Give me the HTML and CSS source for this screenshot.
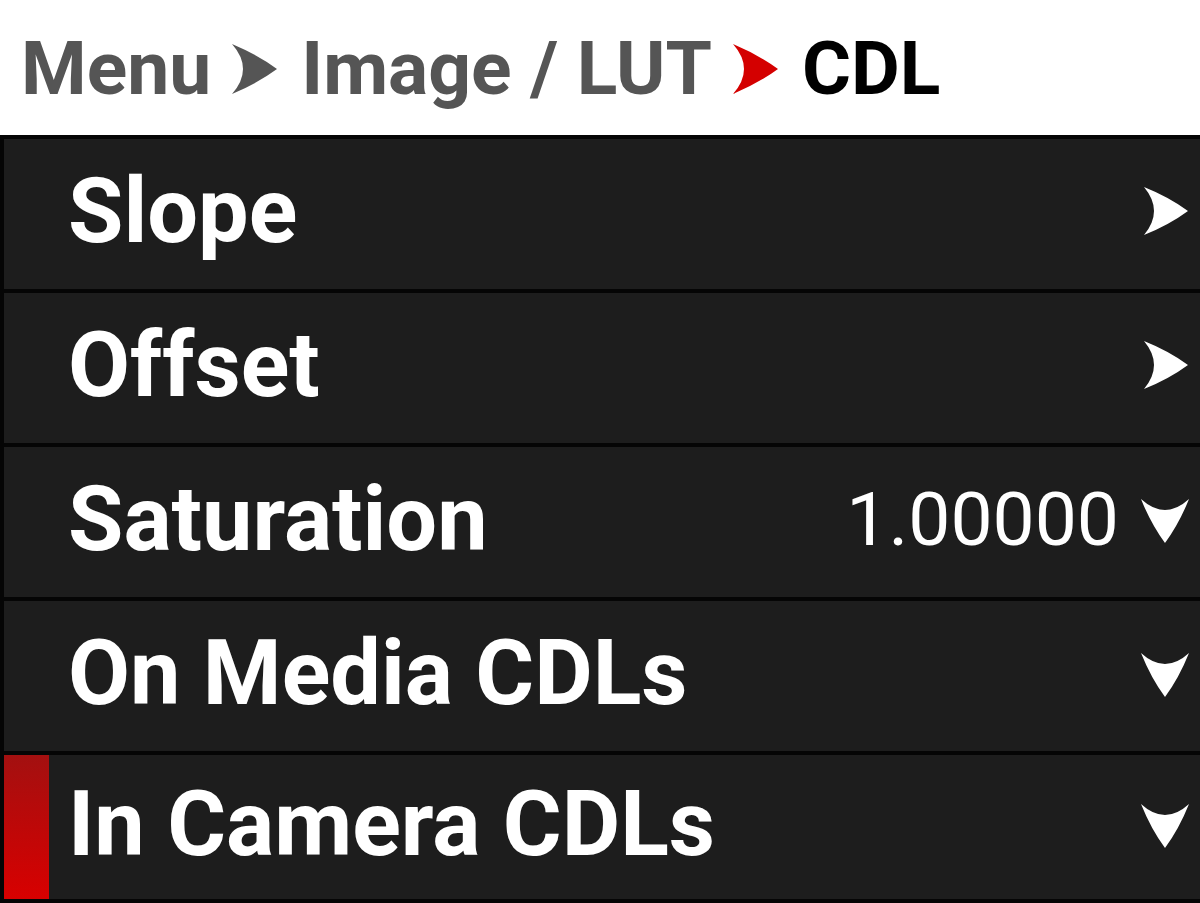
FILE: index.html
```html
<!DOCTYPE html>
<html lang="en">
<head>
    <meta charset="UTF-8">
    <title>CDL</title>
    <link rel="stylesheet" href="styles.css">
</head>
<body>
    <div class="crumbs">
        <span class="crumb">Menu</span>
        <svg class="sep" viewBox="0 0 45 50"><path d="M0 0 Q26 11 45 25 Q26 39 0 50 Q22 25 0 0 Z" fill="#555"/></svg>
        <span class="crumb">Image / LUT</span>
        <svg class="sep" viewBox="0 0 45 50"><path d="M0 0 Q26 11 45 25 Q26 39 0 50 Q22 25 0 0 Z" fill="#d40000"/></svg>
        <span class="crumb current">CDL</span>
    </div>

    <div class="panel">
        <div class="row">
            <span class="label">Slope</span>
            <svg class="go" viewBox="0 0 44 48"><path d="M0 0 Q25 10 44 24 Q25 38 0 48 Q20 24 0 0 Z" fill="#fff"/></svg>
        </div>
        <div class="row">
            <span class="label">Offset</span>
            <svg class="go" viewBox="0 0 44 48"><path d="M0 0 Q25 10 44 24 Q25 38 0 48 Q20 24 0 0 Z" fill="#fff"/></svg>
        </div>
        <div class="row">
            <span class="label">Saturation</span>
            <span class="value">1.00000</span>
            <svg class="drop" viewBox="0 0 48 44"><path d="M0 0 Q24 22 48 0 Q38 25 24 44 Q10 25 0 0 Z" fill="#fff"/></svg>
        </div>
        <div class="row">
            <span class="label">On Media CDLs</span>
            <svg class="drop" viewBox="0 0 48 44"><path d="M0 0 Q24 22 48 0 Q38 25 24 44 Q10 25 0 0 Z" fill="#fff"/></svg>
        </div>
        <div class="row last selected">
            <span class="label">In Camera CDLs</span>
            <svg class="drop" viewBox="0 0 48 44"><path d="M0 0 Q24 22 48 0 Q38 25 24 44 Q10 25 0 0 Z" fill="#fff"/></svg>
        </div>
    </div>
</body>
</html>
```

FILE: styles.css
```css
body {
    margin: 0;
    width: 1200px;
    height: 903px;
    overflow: hidden;
    background: #fff;
    font-family: Roboto, "Liberation Sans", sans-serif;
}
.crumbs {
    height: 135px;
    display: flex;
    align-items: center;
    padding-left: 21px;
    font-size: 75px;
    font-weight: 700;
    color: #555;
    box-sizing: border-box;
    padding-top: 2px;
}
.crumb {
    line-height: 1;
}
.crumb.current {
    color: #000;
}
.sep {
    width: 45px;
    height: 50px;
    margin: 0 24px 0 21px;
}
.panel {
    background: #050505;
    padding: 4px 0 4px 4px;
    display: flex;
    flex-direction: column;
    gap: 4px;
}
.row {
    position: relative;
    height: 150px;
    background: #1d1d1d;
    display: flex;
    align-items: center;
    padding: 0 11px 0 64px;
    color: #fff;
}
.row.last {
    height: 144px;
}
.row.selected::before {
    content: "";
    position: absolute;
    left: 0;
    top: 0;
    bottom: 0;
    width: 45px;
    background: linear-gradient(#a31010, #d80000);
}
.label {
    font-size: 90px;
    font-weight: 700;
    flex: 1;
    padding-bottom: 6px;
}
.value {
    font-size: 75px;
    font-weight: 400;
    margin-right: 22px;
    padding-bottom: 6px;
}
.go {
    width: 44px;
    height: 48px;
    margin-top: -6px;
    margin-right: 1px;
}
.drop {
    width: 48px;
    height: 44px;
    margin-top: -2px;
}
```
